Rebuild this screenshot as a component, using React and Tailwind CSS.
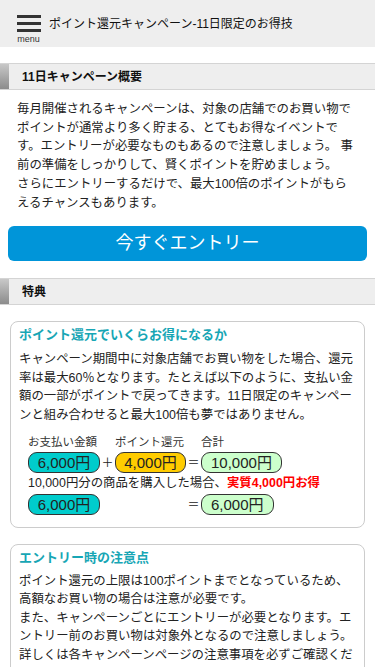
import React from 'react'

const font = { fontFamily: '"Liberation Sans", "Noto Sans CJK JP", sans-serif' }

function SectionHeader({ children }) {
  return (
    <div className="flex h-[27px] items-stretch border-y border-[#d4d4d4] bg-[#eeeeee]">
      <div className="w-[9px] bg-linear-to-b from-[#c8c8c8] to-[#8c8c8c]" />
      <div className="flex items-center pl-[13px] text-[12px] font-bold text-[#111]">{children}</div>
    </div>
  )
}

function Pill({ color, children }) {
  return (
    <span
      className={`inline-flex h-[21px] items-center justify-center whitespace-nowrap rounded-[9px] border border-[#333] px-[9px] text-[15px] leading-none text-[#222] ${color}`}
    >
      {children}
    </span>
  )
}

export default function App() {
  return (
    <div className="min-h-screen bg-white text-[#222]" style={font}>
      {/* header */}
      <header className="flex h-[47px] items-start bg-[#eeeeee] pl-[15px] pt-[15px]">
        <button className="flex w-[27px] flex-col items-center">
          <span className="block h-[3px] w-[24px] bg-[#333]" />
          <span className="mt-[4px] block h-[3px] w-[24px] bg-[#333]" />
          <span className="mt-[4px] block h-[3px] w-[24px] bg-[#333]" />
          <span className="mt-[2px] text-[9px] leading-[10px] text-[#333]">menu</span>
        </button>
        <h1 className="ml-[7px] mt-[1px] text-[12px] leading-[16px] font-normal text-[#111]">
          ポイント還元キャンペーン-11日限定のお得技
        </h1>
      </header>

      <div className="mt-[16px]">
        <SectionHeader>11日キャンペーン概要</SectionHeader>
      </div>

      <div className="px-[17px] pt-[10px] text-[12.4px] leading-[18.7px] text-[#222]">
        <p>
          毎月開催されるキャンペーンは、対象の店舗でのお買い物でポイントが通常より多く貯まる、とてもお得なイベントです。エントリーが必要なものもあるので注意しましょう。 事前の準備をしっかりして、賢くポイントを貯めましょう。
        </p>
        <p>さらにエントリーするだけで、最大100倍のポイントがもらえるチャンスもあります。</p>
      </div>

      <div className="px-[8px] pt-[14px]">
        <button className="flex h-[35px] w-full items-center justify-center rounded-[6px] bg-[#0095d9] text-[18px] text-white">
          今すぐエントリー
        </button>
      </div>

      <div className="mt-[17px]">
        <SectionHeader>特典</SectionHeader>
      </div>

      <div className="flex flex-col gap-[16px] px-[10px] pt-[16px] pb-[20px]">
        <div className="rounded-[8px] border border-[#cccccc] px-[8px] pt-[3px] pb-[10px]">
          <h2 className="text-[13px] leading-[20px] font-bold text-[#17a6b5]">ポイント還元でいくらお得になるか</h2>
          <p className="mt-[5px] text-[12.4px] leading-[18.6px]">
            キャンペーン期間中に対象店舗でお買い物をした場合、還元率は最大60％となります。たとえば以下のように、支払い金額の一部がポイントで戻ってきます。11日限定のキャンペーンと組み合わせると最大100倍も夢ではありません。
          </p>

          <div className="mt-[9px] pl-[9px]">
            <div className="grid grid-cols-[72px_15px_71px_15px_auto] items-center text-[11.5px] leading-[16px] text-[#333]">
              <span>お支払い金額</span>
              <span />
              <span>ポイント還元</span>
              <span />
              <span>合計</span>
            </div>
            <div className="mt-[1px] grid grid-cols-[72px_15px_71px_15px_auto] items-center">
              <Pill color="bg-[#00cccc]">6,000円</Pill>
              <span className="text-center text-[12px]">＋</span>
              <Pill color="bg-[#ffcc00]">4,000円</Pill>
              <span className="text-center text-[12px]">＝</span>
              <div>
                <Pill color="bg-[#ccffcc]">10,000円</Pill>
              </div>
            </div>
            <p className="text-[12.4px] leading-[17px]">
              10,000円分の商品を購入した場合、
              <span className="font-bold text-[#ff0000]">実質4,000円お得</span>
            </p>
            <div className="mt-[1px] grid grid-cols-[72px_15px_71px_15px_auto] items-center">
              <Pill color="bg-[#00cccc]">6,000円</Pill>
              <span />
              <span />
              <span className="text-center text-[12px]">＝</span>
              <div>
                <Pill color="bg-[#ccffcc]">6,000円</Pill>
              </div>
            </div>
          </div>
        </div>

        <div className="rounded-[8px] border border-[#cccccc] px-[8px] pt-[3px] pb-[11px]">
          <h2 className="text-[13px] leading-[20px] font-bold text-[#17a6b5]">エントリー時の注意点</h2>
          <p className="mt-[4px] text-[12.4px] leading-[18.6px]">
            ポイント還元の上限は100ポイントまでとなっているため、高額なお買い物の場合は注意が必要です。
          </p>
          <p className="text-[12.4px] leading-[18.6px]">
            また、キャンペーンごとにエントリーが必要となります。エントリー前のお買い物は対象外となるので注意しましょう。 詳しくは各キャンペーンページの注意事項を必ずご確認ください。期間中は何度でもエントリーできます。
          </p>
        </div>
      </div>
    </div>
  )
}
